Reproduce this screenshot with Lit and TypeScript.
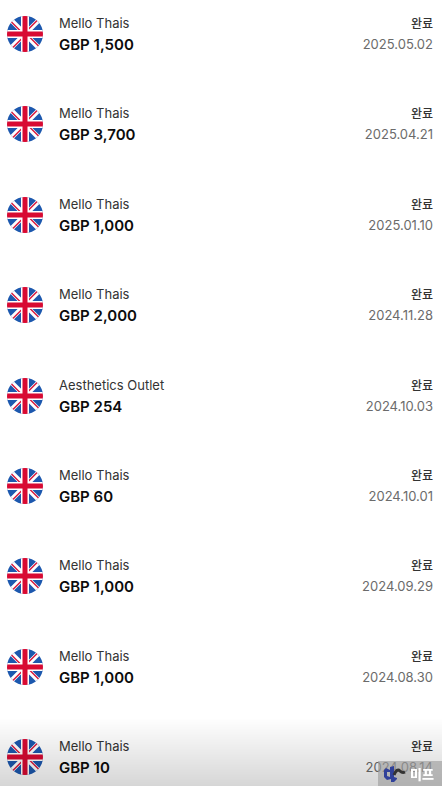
import { LitElement, html, css, svg } from "lit";
import { customElement, property } from "lit/decorators.js";

interface Transfer {
  name: string;
  amount: string;
  date: string;
}

const transfers: Transfer[] = [
  { name: "Mello Thais", amount: "GBP 1,500", date: "2025.05.02" },
  { name: "Mello Thais", amount: "GBP 3,700", date: "2025.04.21" },
  { name: "Mello Thais", amount: "GBP 1,000", date: "2025.01.10" },
  { name: "Mello Thais", amount: "GBP 2,000", date: "2024.11.28" },
  { name: "Aesthetics Outlet", amount: "GBP 254", date: "2024.10.03" },
  { name: "Mello Thais", amount: "GBP 60", date: "2024.10.01" },
  { name: "Mello Thais", amount: "GBP 1,000", date: "2024.09.29" },
  { name: "Mello Thais", amount: "GBP 1,000", date: "2024.08.30" },
  { name: "Mello Thais", amount: "GBP 10", date: "2024.08.14" },
];

// White saltire with its thin red counterchanged strokes.
const diagonals = svg`
  <path d="M3 3 L33 33 M33 3 L3 33" stroke="#fff" stroke-width="4.6" />
  <path d="M4 5.4 L15 16.4 M32 30.6 L21 19.6 M30.6 4 L19.6 15 M5.4 32 L16.4 21" stroke="#d8173c" stroke-width="1.4" />
`;

@customElement("uk-flag")
export class UkFlag extends LitElement {
  static styles = css`
    :host {
      display: block;
      width: 36px;
      height: 36px;
      border-radius: 50%;
      overflow: hidden;
    }
    .flag {
      display: block;
      width: 100%;
      height: 100%;
    }
  `;

  render() {
    return html`
      <svg class="flag" viewBox="0 0 36 36" role="img" aria-label="GBP">
        <rect width="36" height="36" fill="#1c58ae" />
        ${diagonals}
        <path d="M18 0V36M0 18H36" stroke="#fff" stroke-width="8" />
        <path d="M18 0V36M0 18H36" stroke="#d80a32" stroke-width="5" />
      </svg>
    `;
  }
}

@customElement("transfer-row")
export class TransferRow extends LitElement {
  @property({ attribute: false }) transfer!: Transfer;

  static styles = css`
    :host {
      display: flex;
      align-items: center;
      min-height: 44px;
      gap: 16px;
      line-height: 21px;
    }
    .body {
      flex: 1;
      min-width: 0;
    }
    .side {
      text-align: right;
    }
    .name {
      font-size: 13px;
      color: #333;
    }
    .amount {
      font-size: 15px;
      font-weight: 600;
      color: #0c0c0c;
    }
    .status {
      font-size: 12px;
      font-weight: 500;
      color: #333;
    }
    .date {
      font-size: 13px;
      color: #6b6b6b;
    }
  `;

  render() {
    const { name, amount, date } = this.transfer;
    return html`
      <uk-flag></uk-flag>
      <div class="body">
        <div class="name">${name}</div>
        <div class="amount">${amount}</div>
      </div>
      <div class="side">
        <div class="status">완료</div>
        <div class="date">${date}</div>
      </div>
    `;
  }
}

@customElement("app-root")
export class AppRoot extends LitElement {
  static styles = css`
    :host {
      display: block;
      background: #fff;
      font-family: Inter, "Noto Sans CJK KR", sans-serif;
    }
    .list {
      box-sizing: border-box;
      min-height: 100vh;
      margin: 0;
      padding: 12px 9px 7px 7px;
      list-style: none;
      display: flex;
      flex-direction: column;
      justify-content: space-between;
    }
    .shade {
      position: fixed;
      inset: auto 0 0 0;
      height: 68px;
      background: linear-gradient(rgba(0, 0, 0, 0), rgba(0, 0, 0, 0.16));
      pointer-events: none;
    }
    .mark {
      position: fixed;
      right: 0;
      bottom: 0;
      box-sizing: border-box;
      width: 64px;
      height: 25px;
      padding: 0 8px 0 5px;
      display: flex;
      align-items: center;
      justify-content: space-between;
      background: rgba(158, 158, 158, 0.65);
      color: #fff;
      font-size: 13px;
      font-weight: 900;
      line-height: 20px;
    }
    .logo {
      width: 24px;
      height: 18px;
    }
  `;

  render() {
    return html`
      <ul class="list">
        ${transfers.map(
          (t) => html`<li><transfer-row .transfer=${t}></transfer-row></li>`
        )}
      </ul>
      <div class="shade"></div>
      <div class="mark">
        <svg class="logo" viewBox="0 0 24 18" aria-hidden="true">
          <path d="M7 2L11 1V12L14 13V14L11 17H8V14L4 15L1 12V5L3 3L7 5Z M4 7V11L7 12V7Z" fill="#30419a" fill-rule="evenodd" />
          <path d="M11 10C13 5 15 4 17 6C19 8 20 8 22 7" fill="none" stroke="#333" stroke-width="3" />
        </svg>
        <span>미프</span>
      </div>
    `;
  }
}
